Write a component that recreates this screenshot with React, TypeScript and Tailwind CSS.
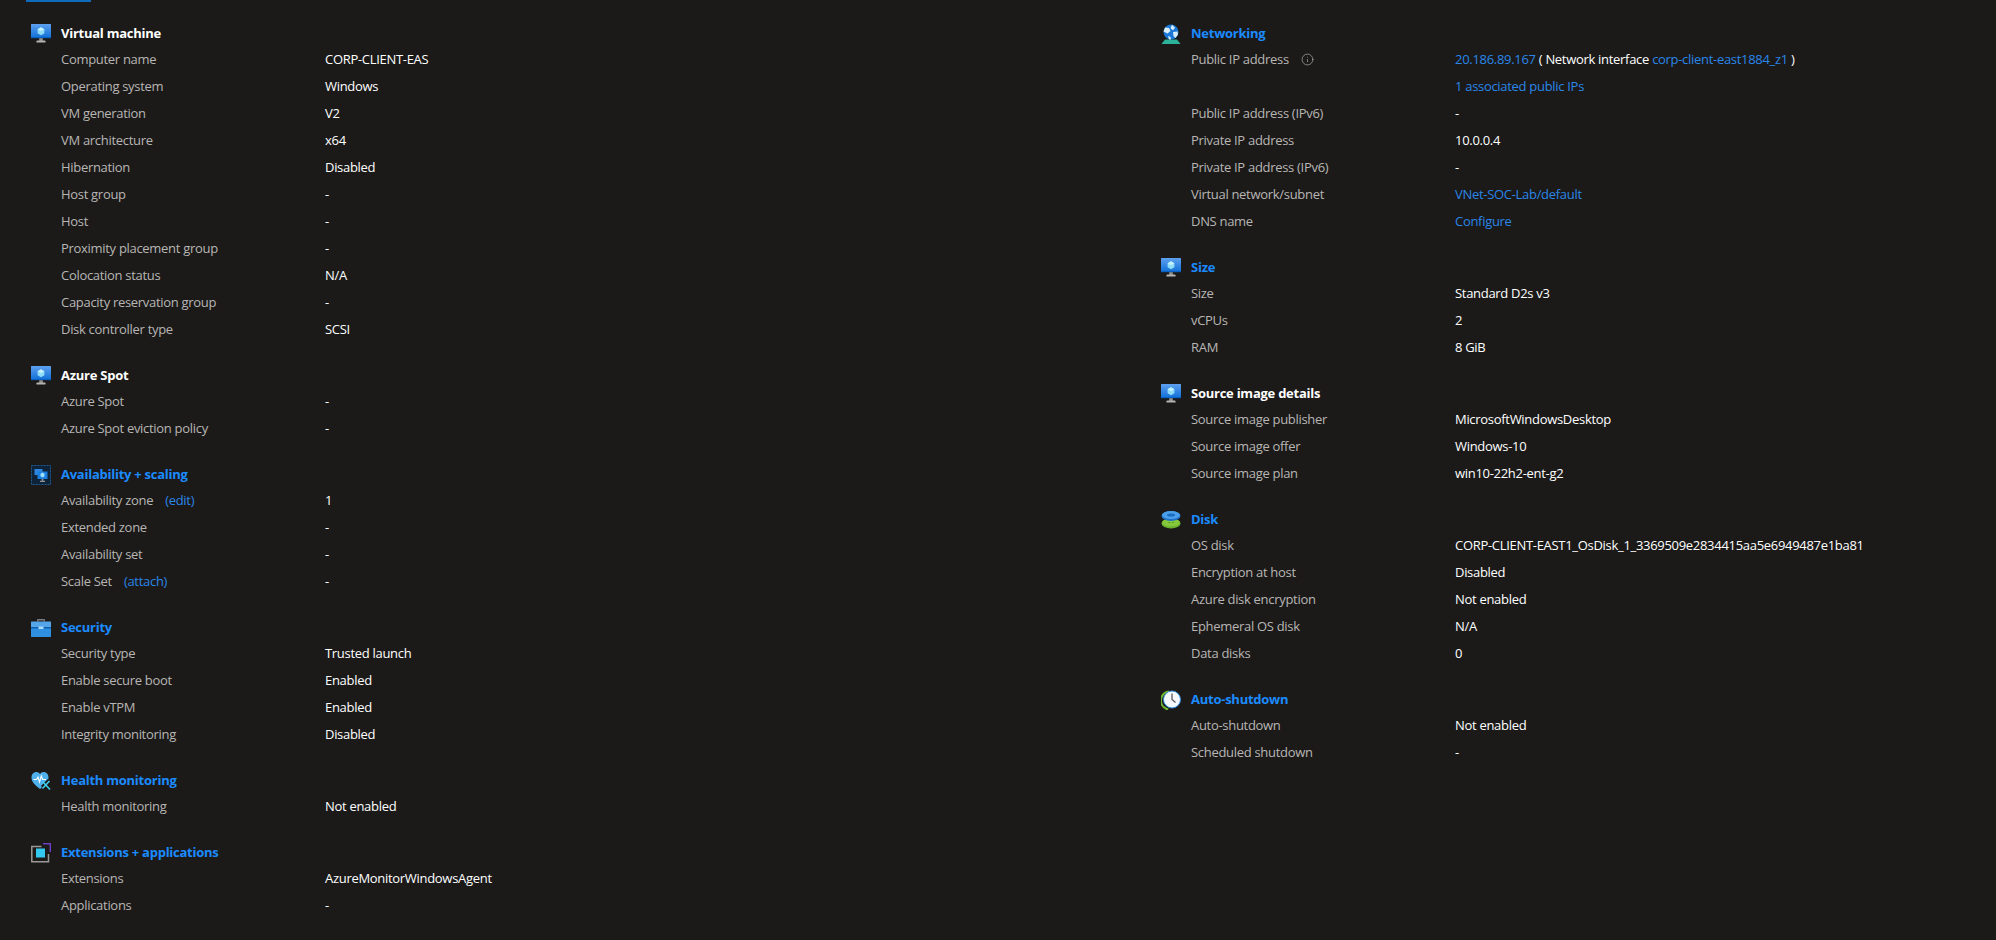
import React from 'react';
import { Info } from 'lucide-react';

const Link: React.FC<{ children: React.ReactNode; className?: string }> = ({ children, className = '' }) => (
	<a className={`text-[#2a86e8] ${className}`}>{children}</a>
);

const MonitorIcon = () => (
	<svg width="20" height="20" viewBox="0 0 20 20">
		<defs>
			<linearGradient id="screen" x1="0" y1="0" x2="0" y2="1">
				<stop offset="0" stopColor="#5ea0ef" />
				<stop offset="1" stopColor="#0f6fd8" />
			</linearGradient>
		</defs>
		<path d="M0.5 0h19a.5.5 0 0 1 .5.5V14H0V.5a.5.5 0 0 1 .5-.5z" fill="url(#screen)" />
		<path d="M0 13h20v1.2H0z" fill="#0a5fc0" />
		<path d="M10 3.2l3.4 2v4l-3.4 2-3.4-2v-4z" fill="#8fdcf8" />
		<path d="M10 3.2l3.4 2-3.4 2-3.4-2z" fill="#c3f1fd" />
		<path d="M8.2 14.2h3.6v3H8.2z" fill="#8f8e8c" />
		<path d="M5.5 17.2c0-.6.5-.8 1-.8h7c.5 0 1 .2 1 .8V18.6h-9z" fill="#b5b3b1" />
	</svg>
);

const ScaleIcon = () => (
	<svg width="20" height="20" viewBox="0 0 20 20">
		<rect x="0.5" y="0.5" width="19" height="19" fill="#0e2238" stroke="#1d5c96" strokeDasharray="2 1" />
		<path d="M3.5 4h8v6h-8z" fill="#2f86e0" />
		<path d="M6.5 6.5h10v7.5h-10z" fill="#1a7fe0" />
		<path d="M11.5 7.6l2 1.2v2.4l-2 1.2-2-1.2V8.8z" fill="#9ce0f8" />
		<path d="M10.6 14h1.8v1.8h-1.8z" fill="#8f8e8c" />
		<path d="M9 15.8h5v1H9z" fill="#b5b3b1" />
	</svg>
);

const SecurityIcon = () => (
	<svg width="20" height="20" viewBox="0 0 20 20">
		<path d="M6 3.5V2c0-.6.4-1 1-1h6c.6 0 1 .4 1 1v1.500h-1.400V2.400H7.400v1.100z" fill="#7c7b79" />
		<path d="M0.5 3.500h19a.5.5 0 0 1 .5.5v5H0V4a.5.500 0 0 1 .5-.5z" fill="#54a6e8" />
		<path d="M0 9h20v9.500a.5.500 0 0 1-.5.500H.5a.5.500 0 0 1-.5-.5z" fill="#2f8fe0" />
		<path d="M0 9h20v1.500H0z" fill="#0f5fae" />
		<path d="M7.500 8.600h5v2.400h-5z" fill="#a9dcf7" />
	</svg>
);

const HealthIcon = () => (
	<svg width="20" height="20" viewBox="0 0 20 20">
		<path d="M9 18C4 14 0.500 11 0.500 6.500 0.500 3.200 2.800 1 5.400 1 7 1 8.200 1.800 9 3c.8-1.200 2-2 3.600-2 2.600 0 4.900 2.200 4.900 5.500C17.500 11 14 14 9 18z" fill="#50b0ec" />
		<path d="M2.500 8.500h3l1.500-2.500 1.500 5 1.800-6 1.300 3.500h3.400" fill="none" stroke="#ffffff" strokeWidth="1.100" />
		<path d="M11 16l7-7" stroke="#1b1a19" strokeWidth="3" />
		<path d="M11.500 10.500l7.500 8M18.500 10l-7 7.500" stroke="#3fd0f0" strokeWidth="1.500" />
	</svg>
);

const ExtensionIcon = () => (
	<svg width="20" height="20" viewBox="0 0 20 20">
		<path d="M12 .8H19.300V9" fill="none" stroke="#6d3fc0" strokeWidth="1.500" />
		<path d="M10.500 3.500H.8V18.700H17.500V11" fill="none" stroke="#9a9997" strokeWidth="1.500" />
		<rect x="5" y="5.500" width="9" height="9" fill="#32c8f0" />
	</svg>
);

const NetworkIcon = () => (
	<svg width="20" height="20" viewBox="0 0 20 20">
		<path d="M4 15.500h12l3.500 4.500H.5z" fill="#2bb39a" />
		<circle cx="10" cy="8" r="7.500" fill="#1c78d8" />
		<path d="M4 3.500l4 .5 1.500 3-3 2.500-4-2zM11 .8l3 3-2 2.500-2.500-2zM12 8l4.500-.5.500 3-2.500 3.500-2-2zM7 12l2.500 1 .5 2.500h-2z" fill="#d8eefb" />
	</svg>
);

const DiskIcon = () => (
	<svg width="20" height="20" viewBox="0 0 20 20">
		<ellipse cx="10" cy="13.500" rx="9.500" ry="5" fill="#6ab02e" />
		<ellipse cx="10" cy="12.500" rx="9" ry="4" fill="#86c83c" />
		<path d="M7.500 12.500h1.500M11 12.500h1.500" stroke="#4f8f1e" />
		<ellipse cx="10" cy="6" rx="9.500" ry="5" fill="#1f70c8" />
		<ellipse cx="10" cy="5" rx="9" ry="4" fill="#4a9eea" />
		<ellipse cx="10" cy="5" rx="4" ry="1.500" fill="#1a6cc0" />
	</svg>
);

const ClockIcon = () => (
	<svg width="20" height="20" viewBox="0 0 20 20">
		<path d="M8 1.500A9 9 0 0 0 5 18.500l1 1.500.5-2" fill="none" stroke="#6fb52e" strokeWidth="2" />
		<circle cx="11" cy="9.500" r="8.500" fill="#f4f8fb" stroke="#2f8fe0" strokeWidth="1" />
		<path d="M11 3.500v6l3.500 3" fill="none" stroke="#5a5958" strokeWidth="1.300" />
	</svg>
);

type RowData = { label: React.ReactNode; value: React.ReactNode };

const Section: React.FC<{ icon: React.ReactNode; title: string; blue?: boolean; rows: RowData[] }> = ({ icon, title, blue, rows }) => (
	<section className="mb-5">
		<div className="flex h-[25px] items-center">
			<div className="w-[30px] shrink-0">{icon}</div>
			<h2 className={`text-[13px] font-bold tracking-[-0.25px] ${blue ? 'text-[#1b8bff]' : 'text-white'}`}>{title}</h2>
		</div>
		{rows.map((row, i) => (
			<div key={i} className="ml-[30px] flex h-[27px] items-center">
				<div className="flex w-[264px] shrink-0 items-center text-[#b8b6b4]">{row.label}</div>
				<div className="text-white">{row.value}</div>
			</div>
		))}
	</section>
);

const r = (label: React.ReactNode, value: React.ReactNode): RowData => ({ label, value });

export default function App() {
	return (
		<div className="relative h-[940px] w-[1996px] overflow-hidden bg-[#1b1a19] font-['Open_Sans','Liberation_Sans',sans-serif] text-[13px] tracking-[-0.3px]">
			<div className="ml-[26px] h-0.5 w-[65px] bg-[#0f6cbd]" />
			<div className="flex pt-[19px]">
				<div className="w-[1130px] shrink-0 pl-[31px]">
					<Section
						icon={<MonitorIcon />}
						title="Virtual machine"
						rows={[
							r('Computer name', 'CORP-CLIENT-EAS'),
							r('Operating system', 'Windows'),
							r('VM generation', 'V2'),
							r('VM architecture', 'x64'),
							r('Hibernation', 'Disabled'),
							r('Host group', '-'),
							r('Host', '-'),
							r('Proximity placement group', '-'),
							r('Colocation status', 'N/A'),
							r('Capacity reservation group', '-'),
							r('Disk controller type', 'SCSI'),
						]}
					/>
					<Section
						icon={<MonitorIcon />}
						title="Azure Spot"
						rows={[r('Azure Spot', '-'), r('Azure Spot eviction policy', '-')]}
					/>
					<Section
						blue
						icon={<ScaleIcon />}
						title="Availability + scaling"
						rows={[
							r(<>Availability zone<Link className="ml-3">(edit)</Link></>, '1'),
							r('Extended zone', '-'),
							r('Availability set', '-'),
							r(<>Scale Set<Link className="ml-3">(attach)</Link></>, '-'),
						]}
					/>
					<Section
						blue
						icon={<SecurityIcon />}
						title="Security"
						rows={[
							r('Security type', 'Trusted launch'),
							r('Enable secure boot', 'Enabled'),
							r('Enable vTPM', 'Enabled'),
							r('Integrity monitoring', 'Disabled'),
						]}
					/>
					<Section
						blue
						icon={<HealthIcon />}
						title="Health monitoring"
						rows={[r('Health monitoring', 'Not enabled')]}
					/>
					<Section
						blue
						icon={<ExtensionIcon />}
						title="Extensions + applications"
						rows={[r('Extensions', 'AzureMonitorWindowsAgent'), r('Applications', '-')]}
					/>
				</div>
				<div className="flex-1 pl-[31px]">
					<Section
						blue
						icon={<NetworkIcon />}
						title="Networking"
						rows={[
							r(
								<>Public IP address<Info size={13} strokeWidth={1.2} className="ml-3 text-[#b8b6b4]" /></>,
								<><Link>20.186.89.167</Link> ( Network interface <Link>corp-client-east1884_z1</Link> )</>,
							),
							r('', <Link>1 associated public IPs</Link>),
							r('Public IP address (IPv6)', '-'),
							r('Private IP address', '10.0.0.4'),
							r('Private IP address (IPv6)', '-'),
							r('Virtual network/subnet', <Link>VNet-SOC-Lab/default</Link>),
							r('DNS name', <Link>Configure</Link>),
						]}
					/>
					<Section
						blue
						icon={<MonitorIcon />}
						title="Size"
						rows={[r('Size', 'Standard D2s v3'), r('vCPUs', '2'), r('RAM', '8 GiB')]}
					/>
					<Section
						icon={<MonitorIcon />}
						title="Source image details"
						rows={[
							r('Source image publisher', 'MicrosoftWindowsDesktop'),
							r('Source image offer', 'Windows-10'),
							r('Source image plan', 'win10-22h2-ent-g2'),
						]}
					/>
					<Section
						blue
						icon={<DiskIcon />}
						title="Disk"
						rows={[
							r('OS disk', 'CORP-CLIENT-EAST1_OsDisk_1_3369509e2834415aa5e6949487e1ba81'),
							r('Encryption at host', 'Disabled'),
							r('Azure disk encryption', 'Not enabled'),
							r('Ephemeral OS disk', 'N/A'),
							r('Data disks', '0'),
						]}
					/>
					<Section
						blue
						icon={<ClockIcon />}
						title="Auto-shutdown"
						rows={[r('Auto-shutdown', 'Not enabled'), r('Scheduled shutdown', '-')]}
					/>
				</div>
			</div>
		</div>
	);
}
